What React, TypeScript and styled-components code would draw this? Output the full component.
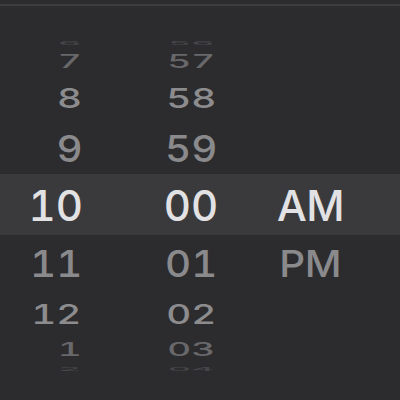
import React from "react";
import styled, { createGlobalStyle } from "styled-components";

const Global = createGlobalStyle`
  html, body { margin: 0; padding: 0; background: #2c2c2e; }
  body { font-family: Inter, "Noto Sans", "Liberation Sans", sans-serif; }
`;

const Screen = styled.div`
  width: 400px;
  height: 400px;
  overflow: hidden;
  background: #2c2c2e;
  display: flex;
  flex-direction: column;
`;

const TopRule = styled.div`
  margin-top: 4px;
  height: 2px;
  background: #3d3d3f;
  flex: none;
`;

const Picker = styled.div`
  padding-top: 30px;
  display: flex;
  flex-direction: column;
`;

const Row = styled.div<{ $h: number; $selected?: boolean }>`
  height: ${(p) => p.$h}px;
  display: grid;
  grid-template-columns: 141px 100px 1fr;
  padding-right: 20px;
  padding-top: ${(p) => (p.$selected ? 3 : 0)}px;
  box-sizing: border-box;
  background: ${(p) => (p.$selected ? "#3a3a3c" : "transparent")};
`;

const Cell = styled.div<{ $align: "right" | "center"; $tight?: boolean }>`
  display: flex;
  align-items: center;
  justify-content: ${(p) => (p.$align === "right" ? "flex-end" : "center")};
  padding-right: ${(p) => (p.$align === "right" ? 58 : 0)}px;
  letter-spacing: ${(p) => (p.$tight ? "-0.03em" : "0")};
  min-height: 0;
`;

const Value = styled.span<{ $color: string }>`
  display: inline-block;
  font-size: 42px;
  line-height: 1;
  font-weight: 500;
  font-variant-numeric: tabular-nums;
  color: ${(p) => p.$color};
  white-space: nowrap;
  transform-origin: 50% 50%;
`;

type RowData = {
  h: number;
  hour: string;
  minute: string;
  ampm?: string;
  sx: number;
  sy: number;
  color: string;
  selected?: boolean;
};

const rows: RowData[] = [
  { h: 14, hour: "6", minute: "56", sx: 0.85, sy: 0.12, color: "#464649" },
  { h: 23, hour: "7", minute: "57", sx: 0.88, sy: 0.43, color: "#68686b" },
  { h: 50, hour: "8", minute: "58", sx: 0.92, sy: 0.66, color: "#8c8c8f" },
  { h: 51, hour: "9", minute: "59", sx: 0.96, sy: 0.89, color: "#8a8a8d" },
  { h: 61, hour: "10", minute: "00", ampm: "AM", sx: 1, sy: 1, color: "#e2e2e4", selected: true },
  { h: 57, hour: "11", minute: "01", ampm: "PM", sx: 0.96, sy: 0.89, color: "#8a8a8d" },
  { h: 44, hour: "12", minute: "02", sx: 0.92, sy: 0.64, color: "#8c8c8f" },
  { h: 28, hour: "1", minute: "03", sx: 0.88, sy: 0.43, color: "#68686b" },
  { h: 10, hour: "2", minute: "04", sx: 0.85, sy: 0.12, color: "#464649" },
];

export default function App() {
  return (
    <Screen>
      <Global />
      <TopRule />
      <Picker>
        {rows.map((r, i) => {
          const t = { transform: `scale(${r.sx}, ${r.sy})` };
          return (
            <Row key={i} $h={r.h} $selected={r.selected}>
              <Cell $align="right">
                <Value $color={r.color} style={t}>{r.hour}</Value>
              </Cell>
              <Cell $align="center">
                <Value $color={r.color} style={t}>{r.minute}</Value>
              </Cell>
              <Cell $align="center" $tight>
                {r.ampm && <Value $color={r.color} style={t}>{r.ampm}</Value>}
              </Cell>
            </Row>
          );
        })}
      </Picker>
    </Screen>
  );
}
